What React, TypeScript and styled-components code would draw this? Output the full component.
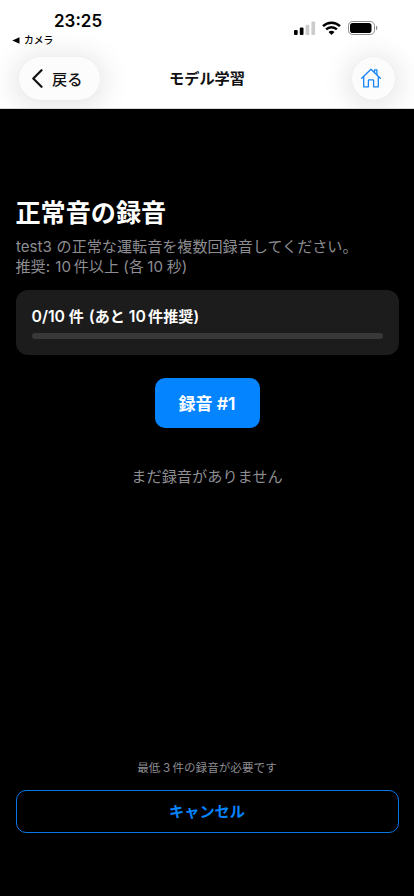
import React from 'react';
import styled, { createGlobalStyle } from 'styled-components';

const GlobalStyle = createGlobalStyle`
  * { box-sizing: border-box; }
  body { margin: 0; background: #000; }
  button { font: inherit; border: 0; padding: 0; margin: 0; }
`;

const Screen = styled.div`
  width: 100%;
  height: 896px;
  display: flex;
  flex-direction: column;
  overflow: hidden;
  background: #000;
  color: #fff;
  font-family: Inter, 'Noto Sans CJK JP', sans-serif;
`;

const Header = styled.header`
  flex: none;
  height: 108.5px;
  overflow: hidden;
  background: #fff;
  border-bottom: 1px solid #d5dadb;
  color: #111;
`;

const StatusBar = styled.div`
  height: 48px;
  display: flex;
  justify-content: space-between;
`;

const StatusLeft = styled.div`
  padding-top: 11px;
`;

const Clock = styled.div`
  padding-left: 54px;
  font-size: 17px;
  font-weight: 600;
  line-height: 20px;
  letter-spacing: 0;
  color: #000;
`;

const ReturnApp = styled.div`
  display: flex;
  align-items: center;
  gap: 4px;
  padding: 2px 0 0 12px;
  font-size: 9.8px;
  line-height: 15px;
  font-weight: 500;
  color: #000;
`;

const StatusIcons = styled.div`
  display: flex;
  align-items: center;
  height: 16px;
  margin: 20px 36px 0 0;
  svg { display: block; }
`;

const NavBar = styled.nav`
  display: grid;
  grid-template-columns: 100px 1fr 100px;
  align-items: center;
  height: 60px;
  padding: 0 19px;
`;

const glass = `
  background: #fcfcfc;
  border-radius: 22px;
  box-shadow: 0 3px 26px 7px rgba(0, 0, 0, 0.09), 0 0 2px rgba(0, 0, 0, 0.04);
`;

const BackButton = styled.button`
  ${glass}
  width: 81px;
  height: 43px;
  display: flex;
  align-items: center;
  gap: 9px;
  padding: 0 0 1px 13px;
  font-size: 15.2px;
  font-weight: 500;
  color: #111;
  svg { margin-top: 2px; }
`;

const HomeButton = styled.button`
  ${glass}
  width: 43px;
  height: 43px;
  display: flex;
  align-items: center;
  justify-content: center;
  justify-self: end;
  padding-right: 6px;
`;

const NavTitle = styled.div`
  padding-top: 1px;
  text-align: center;
  font-size: 15.2px;
  line-height: 22px;
  font-weight: 600;
`;

const Main = styled.main`
  flex: 1;
  display: flex;
  flex-direction: column;
  padding: 86px 15.5px 63.5px;
`;

const Title = styled.h1`
  margin: 0;
  font-size: 25.1px;
  line-height: 36px;
  font-weight: 700;
`;

const Description = styled.p`
  margin: 6px 0 0;
  font-size: 15.1px;
  line-height: 20px;
  color: #8d8d92;
  white-space: nowrap;
`;

const Numeral = styled.span<{ $before?: number; $after?: number; $size?: number }>`
  margin-left: ${({ $before = 0 }) => $before}px;
  margin-right: ${({ $after = 0 }) => $after}px;
  font-size: ${({ $size }) => ($size ? `${$size}px` : 'inherit')};
  line-height: 1;
`;

const ProgressCard = styled.section`
  height: 65px;
  margin-top: 13.5px;
  padding: 16px 16px 0;
  border-radius: 12px;
  background: #1c1c1c;
`;

const ProgressLabel = styled.div`
  font-size: 15.1px;
  line-height: 22px;
  font-weight: 600;
  white-space: nowrap;
`;

const Track = styled.div`
  height: 6px;
  margin-top: 5px;
  border-radius: 3px;
  background: #383838;
`;

const RecordButton = styled.button`
  align-self: center;
  width: 105px;
  height: 50px;
  margin-top: 22.5px;
  border-radius: 10px;
  background: #0584ff;
  color: #fff;
  font-size: 17px;
  font-weight: 600;
  white-space: nowrap;
`;

const Empty = styled.p`
  margin: 38px 0 0;
  text-align: center;
  font-size: 15.2px;
  line-height: 22px;
  color: #8d8d92;
`;

const Footer = styled.footer`
  margin-top: auto;
  text-align: center;
`;

const Hint = styled.p`
  margin: 0 0 13px;
  font-size: 11.6px;
  line-height: 18px;
  color: #8d8d92;
`;

const CancelButton = styled.button`
  display: block;
  width: 100%;
  height: 42.5px;
  padding-bottom: 2px;
  border: 1px solid #0878e8;
  border-radius: 10px;
  background: #000;
  color: #0584ff;
  font-size: 15.2px;
  font-weight: 600;
`;

const Signal = () => (
  <svg width="22" height="14" viewBox="0 0 22 14">
    <rect x="0" y="9" width="3.7" height="5" rx="1" fill="#000" />
    <rect x="5.8" y="6.5" width="3.7" height="7.5" rx="1" fill="#000" />
    <rect x="11.6" y="3.7" width="3.7" height="10.3" rx="1" fill="#ccc" />
    <rect x="17.4" y="0.5" width="3.7" height="13.5" rx="1" fill="#ccc" />
  </svg>
);

const Wifi = () => (
  <svg width="19" height="14" viewBox="0 0 19 14" fill="none" stroke="#000" strokeWidth="2.5">
    <path d="M1 5.1C5.8.5 13.2.5 18 5.1" />
    <path d="M4.1 8.4c3.1-2.9 7.7-2.9 10.8 0" />
    <path d="M6.5 10.9c1.7-1.6 4.3-1.6 6 0l-3 3z" fill="#000" stroke="none" />
  </svg>
);

const Battery = () => (
  <svg width="30" height="14" viewBox="0 0 30 14">
    <rect x="0.5" y="0.5" width="26" height="13" rx="4.2" fill="none" stroke="#8c8c8c" />
    <rect x="2" y="2" width="21.5" height="10" rx="2.8" fill="#000" />
    <path d="M28 4.8c1.9.6 1.9 3.8 0 4.4z" fill="#8c8c8c" />
  </svg>
);

const Spacer = styled.span<{ $w: number }>`
  width: ${({ $w }) => $w}px;
`;

const Chevron = () => (
  <svg width="11" height="19" viewBox="0 0 11 19" fill="none" stroke="#111" strokeWidth="2.2" strokeLinecap="round" strokeLinejoin="round">
    <path d="M9.5 1.2 1.3 9.5l8.2 8.3" />
  </svg>
);

const House = () => (
  <svg width="20" height="20" viewBox="0 0 20 20" fill="none" stroke="#1684f5" strokeWidth="1.3" strokeLinecap="round" strokeLinejoin="round">
    <path d="M.7 10.2 10 1.2l9.3 9" />
    <path d="M2.7 8.6v10.2h4.7v-6.2c0-.5.3-.8.8-.8h3.6c.5 0 .8.3.8.8v6.2h4.7V8.6" />
    <path d="M13.5 4.2V1.8h2.4v4.8" />
  </svg>
);

export default function App() {
  return (
    <Screen>
      <GlobalStyle />
      <Header>
        <StatusBar>
          <StatusLeft>
            <Clock>23:25</Clock>
            <ReturnApp>
              <svg width="8" height="7" viewBox="0 0 8 7"><path d="M.3 3.5 7.5.2v6.6z" /></svg>
              カメラ
            </ReturnApp>
          </StatusLeft>
          <StatusIcons>
            <Signal />
            <Spacer $w={6} />
            <Wifi />
            <Spacer $w={7} />
            <Battery />
          </StatusIcons>
        </StatusBar>
        <NavBar>
          <BackButton><Chevron />戻る</BackButton>
          <NavTitle>モデル学習</NavTitle>
          <HomeButton aria-label="ホーム"><House /></HomeButton>
        </NavBar>
      </Header>
      <Main>
        <Title>正常音の録音</Title>
        <Description>
          <Numeral $before={0.5} $after={0.5}>test3</Numeral> の正常な運転音を複数回録音してください。
          <br />
          推奨: <Numeral $before={1} $after={-1.5}>10</Numeral> 件以上 (各<Numeral $before={3.5} $after={-0.5}>10</Numeral> 秒)
        </Description>
        <ProgressCard>
          <ProgressLabel>
            <Numeral $size={15.8}>0/10</Numeral> 件 <Numeral $before={1} $size={16}>(</Numeral>あと
            {' '}<Numeral $size={15.8} $after={-1.5}>10</Numeral> 件推奨)
          </ProgressLabel>
          <Track />
        </ProgressCard>
        <RecordButton>録音 <Numeral $size={17.6}>#1</Numeral></RecordButton>
        <Empty>まだ録音がありません</Empty>
        <Footer>
          <Hint>最低<Numeral $before={2.5} $after={-1}>3</Numeral> 件の録音が必要です</Hint>
          <CancelButton>キャンセル</CancelButton>
        </Footer>
      </Main>
    </Screen>
  );
}
